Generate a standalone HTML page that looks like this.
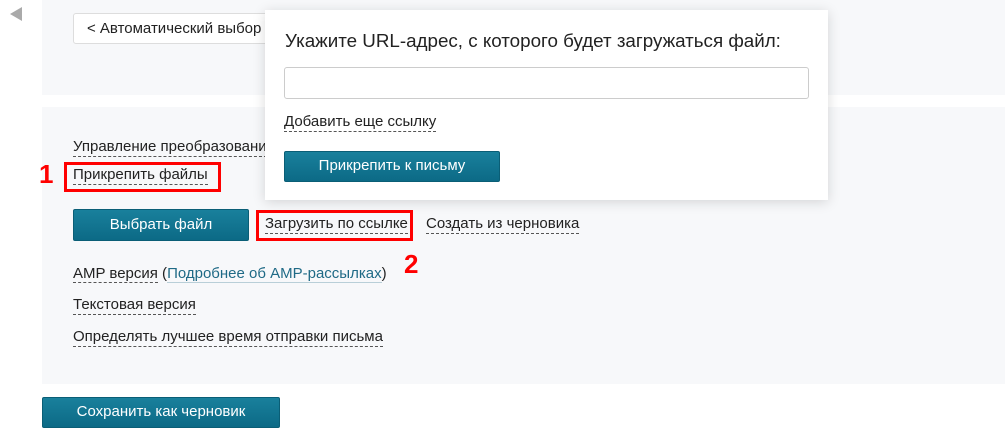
<!DOCTYPE html>
<html><head><meta charset="utf-8"><style>
*{margin:0;padding:0;box-sizing:border-box}
body{width:1005px;height:436px;background:#fff;font-family:"Liberation Sans","DejaVu Sans",sans-serif;font-size:15px;color:#222;position:relative;overflow:hidden}
.a{position:absolute}
.panel{background:#f7f8fa}
.lnk{border-bottom:1px dashed #555;line-height:18px;white-space:nowrap}
.btn{background:#0e7390;background:linear-gradient(#19809c,#0c6a86);color:#fff;border-radius:2px;text-align:center;font-size:15px;border:1px solid #0a5e76}
.red{border:3px solid #f00}
.num{color:#f00;font-weight:bold;font-size:26px}
</style></head><body>
<div class="a" style="left:10px;top:7px;width:0;height:0;border-top:7px solid transparent;border-bottom:7px solid transparent;border-right:12px solid #aaa"></div>
<div class="a panel" style="left:42px;top:0;width:963px;height:95px"></div>
<div class="a panel" style="left:42px;top:107px;width:963px;height:277px"></div>
<div class="a" style="left:73px;top:13px;width:200px;height:31px;background:#fff;border:1px solid #ddd;border-radius:3px;padding:6px 0 0 13px;white-space:nowrap;overflow:hidden">&lt; Автоматический выбор</div>
<div class="a lnk" style="left:73px;top:138px">Управление преобразовани</div>
<div class="a red" style="left:64px;top:162px;width:157px;height:30px"></div>
<div class="a lnk" style="left:73px;top:166px">Прикрепить файлы</div>
<div class="a num" style="left:39px;top:159px">1</div>
<div class="a btn" style="left:73px;top:209px;width:176px;height:32px;line-height:29px">Выбрать файл</div>
<div class="a red" style="left:256px;top:210px;width:157px;height:31px"></div>
<div class="a lnk" style="left:265px;top:215px">Загрузить по ссылке</div>
<div class="a lnk" style="left:426px;top:215px">Создать из черновика</div>
<div class="a num" style="left:404px;top:249px">2</div>
<div class="a" style="left:73px;top:265px;white-space:nowrap;line-height:18px"><span class="lnk">AMP версия</span> (<span style="color:#1f6a86;border-bottom:1px solid #b9cfd8">Подробнее об AMP-рассылках</span>)</div>
<div class="a lnk" style="left:73px;top:296px">Текстовая версия</div>
<div class="a lnk" style="left:73px;top:328px">Определять лучшее время отправки письма</div>
<div class="a btn" style="left:42px;top:397px;width:238px;height:31px;line-height:28px">Сохранить как черновик</div>
<div class="a" style="left:265px;top:10px;width:563px;height:190px;background:#fff;box-shadow:0 2px 12px rgba(0,0,0,.15)">
<div class="a" style="left:20px;top:20px;font-size:18.8px;white-space:nowrap">Укажите URL-адрес, с которого будет загружаться файл:</div>
<div class="a" style="left:19px;top:57px;width:525px;height:32px;border:1px solid #ccc;border-radius:3px"></div>
<div class="a lnk" style="left:19px;top:103px">Добавить еще ссылку</div>
<div class="a btn" style="left:19px;top:141px;width:216px;height:31px;line-height:28px">Прикрепить к письму</div>
</div>
</body></html>
